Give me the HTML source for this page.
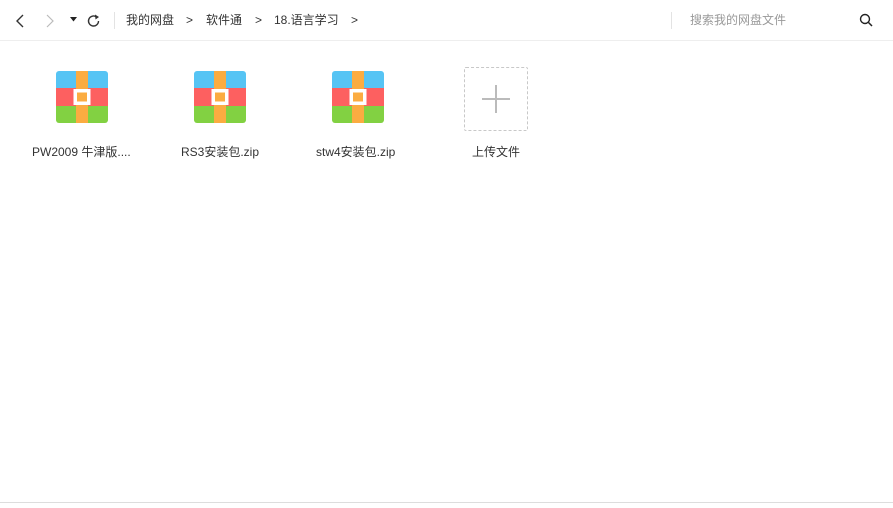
<!DOCTYPE html>
<html><head><meta charset="utf-8"><style>
*{margin:0;padding:0;box-sizing:border-box}
body{width:893px;height:508px;background:#fff;font-family:"Liberation Sans","Noto Sans CJK SC",sans-serif;color:#333;position:relative;overflow:hidden}
.top{position:absolute;left:0;top:0;width:893px;height:41px;border-bottom:1px solid #eee}
.t{position:absolute;font-size:12px;top:13px;line-height:15px}
.sep{position:absolute;left:114px;top:12px;width:1px;height:17px;background:#e3e3e3}
.sep2{position:absolute;left:671px;top:12px;width:1px;height:17px;background:#e3e3e3}
.item{position:absolute;top:71px;width:140px;text-align:center}
.name{position:absolute;top:144px;font-size:12px;line-height:16px;white-space:nowrap}
.bot{position:absolute;left:0;top:502px;width:893px;height:1px;background:#ddd}
</style></head><body>
<div class="top">
<svg style="position:absolute;left:14px;top:13px" width="12" height="16"><path d="M9 2L3 8l6 6" stroke="#333" stroke-width="1.4" fill="none"/></svg>
<svg style="position:absolute;left:44px;top:13px" width="12" height="16"><path d="M3 2l6 6-6 6" stroke="#bbb" stroke-width="1.2" fill="none"/></svg>
<svg style="position:absolute;left:70px;top:17px" width="8" height="6"><path d="M0 0h7L3.5 4.5z" fill="#222"/></svg>
<svg style="position:absolute;left:86px;top:13px" width="16" height="16"><path d="M12.5 8A5 5 0 1 1 10.5 4" stroke="#333" stroke-width="1.4" fill="none"/><path d="M9 1.5l4 2.5-3.5 2.5z" fill="#333"/></svg>
<div class="sep"></div>
<div class="t" style="left:126px">我的网盘</div>
<div class="t" style="left:186px">&gt;</div>
<div class="t" style="left:206px">软件通</div>
<div class="t" style="left:255px">&gt;</div>
<div class="t" style="left:274px">18.语言学习</div>
<div class="t" style="left:351px">&gt;</div>
<div class="sep2"></div>
<div class="t" style="left:690px;color:#999">搜索我的网盘文件</div>
<svg style="position:absolute;left:859px;top:13px" width="15" height="15"><circle cx="6" cy="6" r="4.5" stroke="#222" stroke-width="1.4" fill="none"/><path d="M9.5 9.5l3.5 3.5" stroke="#222" stroke-width="1.5"/></svg>
</div>

<svg style="position:absolute;left:56px;top:71px" width="52" height="52"><defs><clipPath id="c"><rect width="52" height="52" rx="3"/></clipPath></defs><g clip-path="url(#c)"><rect width="52" height="17" fill="#56c4f4"/><rect y="17" width="52" height="18" fill="#fd6060"/><rect y="35" width="52" height="17" fill="#82d142"/><rect x="20" width="12" height="52" fill="#fbac41"/><rect x="17.5" y="18" width="17" height="16" fill="#fff"/><rect x="21" y="21.5" width="10" height="9" fill="#fbac41"/></g></svg>
<svg style="position:absolute;left:194px;top:71px" width="52" height="52"><g clip-path="url(#c)"><rect width="52" height="17" fill="#56c4f4"/><rect y="17" width="52" height="18" fill="#fd6060"/><rect y="35" width="52" height="17" fill="#82d142"/><rect x="20" width="12" height="52" fill="#fbac41"/><rect x="17.5" y="18" width="17" height="16" fill="#fff"/><rect x="21" y="21.5" width="10" height="9" fill="#fbac41"/></g></svg>
<svg style="position:absolute;left:332px;top:71px" width="52" height="52"><g clip-path="url(#c)"><rect width="52" height="17" fill="#56c4f4"/><rect y="17" width="52" height="18" fill="#fd6060"/><rect y="35" width="52" height="17" fill="#82d142"/><rect x="20" width="12" height="52" fill="#fbac41"/><rect x="17.5" y="18" width="17" height="16" fill="#fff"/><rect x="21" y="21.5" width="10" height="9" fill="#fbac41"/></g></svg>
<div style="position:absolute;left:464px;top:67px;width:64px;height:64px;border:1px dashed #c8c8c8;border-radius:2px"></div>
<svg style="position:absolute;left:482px;top:85px" width="28" height="28"><path d="M14 0v28M0 14h28" stroke="#bbb" stroke-width="2"/></svg>

<div class="name" style="left:32px">PW2009 牛津版....</div>
<div class="name" style="left:181px">RS3安装包.zip</div>
<div class="name" style="left:316px">stw4安装包.zip</div>
<div class="name" style="left:472px">上传文件</div>
<div class="bot"></div>
</body></html>
